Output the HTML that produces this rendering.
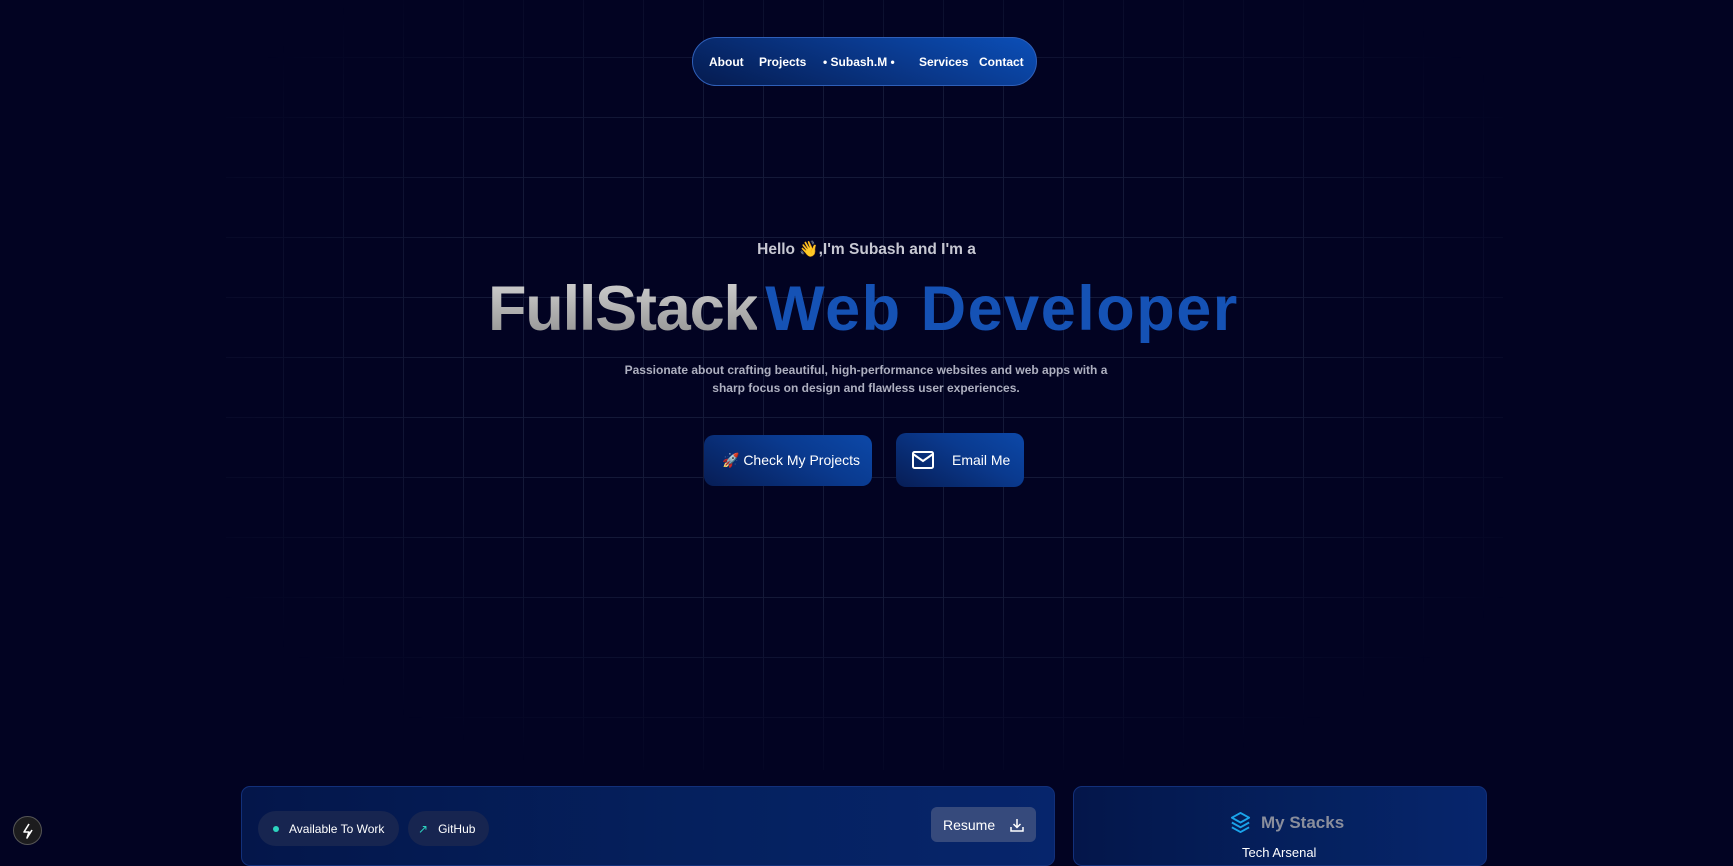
<!DOCTYPE html>
<html><head><meta charset="utf-8"><style>
*{margin:0;padding:0;box-sizing:border-box}
html,body{width:1733px;height:852px;overflow:hidden;background:#020322;font-family:"Liberation Sans",sans-serif}
.grid{position:absolute;left:226px;top:0;width:1277px;height:770px;
background-image:linear-gradient(#141938 1px,transparent 1px),linear-gradient(90deg,#141938 1px,transparent 1px);
background-size:60px 60px;background-position:-3px 57px;
-webkit-mask-image:radial-gradient(ellipse 60% 60% at 50% 45%,#000 55%,transparent 100%);mask-image:radial-gradient(ellipse 60% 60% at 50% 45%,#000 55%,transparent 100%)}
.nav{position:absolute;left:692px;top:37px;width:345px;height:49px;border-radius:25px;border:1px solid #2f5fb8;
background:linear-gradient(20deg,#051b4f 0%,#0a3a8f 60%,#0b4fb8 100%);color:#fff;font-weight:bold;font-size:12px}
.nav span{position:absolute;top:17px}
.hello{position:absolute;top:240px;left:0;width:1733px;text-align:center;color:#c7c8d2;font-weight:bold;font-size:15.5px}
.h1{position:absolute;top:272px;left:488px;font-weight:bold;font-size:63px;white-space:nowrap;line-height:74px}
.fs{background:linear-gradient(180deg,#d5d5d5,#8d8d8d);-webkit-background-clip:text;color:transparent;letter-spacing:-1.2px}
.wd{color:#1552b5;letter-spacing:1.5px;margin-left:8px}
.p{position:absolute;top:361px;left:611px;width:510px;text-align:center;color:#aeb0c0;font-size:12px;line-height:18px;font-weight:bold}
.btn{position:absolute;border-radius:10px;background:linear-gradient(30deg,#071d55 0%,#0a3a8f 60%,#0c48a8 100%);color:#fff;font-size:14px;display:flex;align-items:center}
.card{position:absolute;top:786px;height:80px;border-radius:9px;border:1px solid #12307a;background:linear-gradient(90deg,#04164a 0%,#05215f 60%,#06256c 100%)}
.pill{position:absolute;top:24px;height:35px;border-radius:18px;background:#172550;color:#fff;font-size:12px;display:flex;align-items:center}
</style></head><body>
<div class="grid"></div>
<div class="nav">
<span style="left:16px">About</span><span style="left:66px">Projects</span>
<span style="left:130px">• Subash.M •</span><span style="left:226px">Services</span><span style="left:286px">Contact</span>
</div>
<div class="hello">Hello 👋,I'm Subash and I'm a</div>
<div class="h1"><span class="fs">FullStack</span><span class="wd">Web Developer</span></div>
<div class="p">Passionate about crafting beautiful, high-performance websites and web apps with a<br>sharp focus on design and flawless user experiences.</div>
<div class="btn" style="left:704px;top:435px;width:168px;height:51px;padding-left:18px">🚀&nbsp;Check My Projects</div>
<div class="btn" style="left:896px;top:433px;width:128px;height:54px;padding-left:16px">
<svg width="22" height="18" viewBox="0 0 22 18" fill="none" stroke="#fff" stroke-width="2"><rect x="1" y="1" width="20" height="16" rx="1.5"/><path d="M1 3l10 7 10-7"/></svg>
<span style="margin-left:18px">Email Me</span></div>
<div class="card" style="left:241px;width:814px">
<div class="pill" style="left:16px;width:141px;padding-left:15px"><span style="width:6px;height:6px;border-radius:50%;background:#2dd4bf;margin-right:10px"></span>Available To Work</div>
<div class="pill" style="left:166px;width:81px;padding-left:10px"><span style="color:#2dd4bf;margin-right:10px;font-size:12px">↗</span>GitHub</div>
<div style="position:absolute;left:689px;top:20px;width:105px;height:35px;border-radius:6px;background:#364a7c;color:#fff;font-size:14px;display:flex;align-items:center;padding-left:12px">Resume
<svg style="margin-left:14px" width="16" height="16" viewBox="0 0 16 16" fill="none" stroke="#fff" stroke-width="1.5"><path d="M8 2v8M4.5 7L8 10.5 11.5 7M2 10v4h12v-4"/></svg></div>
</div>
<div class="card" style="left:1073px;width:414px">
<svg style="position:absolute;left:155px;top:23px" width="23" height="25" viewBox="0 0 24 24" fill="none" stroke="#1aa3ea" stroke-width="2" stroke-linejoin="round"><path d="M12 2L3 7l9 5 9-5-9-5z"/><path d="M3 12l9 5 9-5"/><path d="M3 17l9 5 9-5"/></svg>
<div style="position:absolute;left:187px;top:26px;color:#8a8e9c;font-weight:bold;font-size:17px">My Stacks</div>
<div style="position:absolute;left:168px;top:58px;color:#fff;font-size:13px">Tech Arsenal</div>
</div>
<div style="position:absolute;left:13px;top:816px;width:29px;height:29px;border-radius:50%;background:#1c1c1e;border:1px solid #555;display:flex;align-items:center;justify-content:center">
<svg width="14" height="16" viewBox="0 0 14 16" fill="none" stroke="#fff" stroke-width="1.6" stroke-linejoin="round"><path d="M8 1L3 9h5l-2 6 5-8"/></svg></div>
</body></html>
